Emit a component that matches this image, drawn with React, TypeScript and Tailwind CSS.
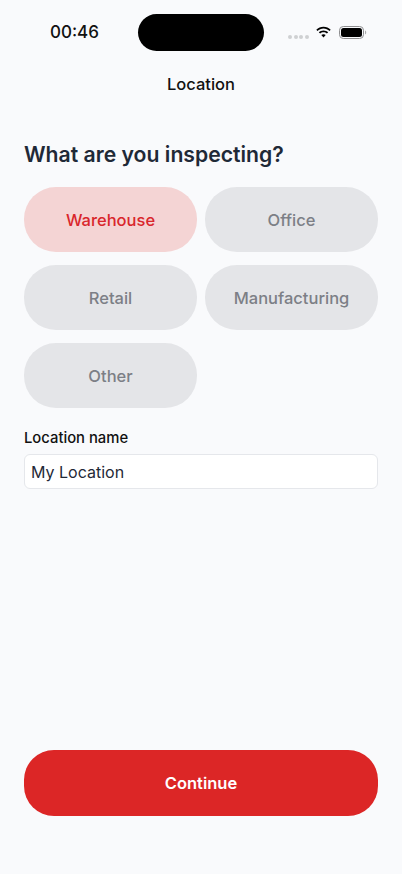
export default function App() {
  const Pill = ({ label, active }: { label: string; active?: boolean }) => (
    <div
      className={
        "h-[65px] pt-[1px] rounded-[32px] flex items-center justify-center text-[16.5px] font-medium " +
        (active ? "bg-[#f4d4d4] text-[#d9262c]" : "bg-[#e4e5e8] text-[#7c7f86]")
      }
    >
      {label}
    </div>
  );
  return (
    <div
      className="w-[402px] h-[874px] bg-[#f9fafc] flex flex-col overflow-hidden"
      style={{ fontFamily: "Inter, sans-serif" }}
    >
      <div className="relative h-[64px] shrink-0">
        <div className="absolute left-[50px] top-[21px] text-[17px] leading-[22px] font-medium text-[#111]">00:46</div>
        <div className="absolute left-[138px] top-[14px] w-[126px] h-[37px] rounded-full bg-black" />
        <div className="absolute left-[288px] top-[35px] flex gap-[1.5px]">
          <span className="w-[4px] h-[4px] rounded-full bg-[#cfd0d2]" />
          <span className="w-[4px] h-[4px] rounded-full bg-[#cfd0d2]" />
          <span className="w-[4px] h-[4px] rounded-full bg-[#cfd0d2]" />
          <span className="w-[4px] h-[4px] rounded-full bg-[#cfd0d2]" />
        </div>
        <svg className="absolute left-[315px] top-[26px]" width="17" height="13" viewBox="0 0 17 13">
          <path d="M8.5 2.6c2.3 0 4.4.9 6 2.4l1.2-1.3C13.8 1.9 11.3.8 8.5.8S3.2 1.9 1.3 3.7L2.5 5c1.6-1.5 3.7-2.4 6-2.4z" fill="#000" />
          <path d="M8.5 6.3c1.3 0 2.5.5 3.4 1.3l1.3-1.3C11.9 5.1 10.3 4.4 8.5 4.4s-3.4.7-4.7 1.9l1.3 1.3c.9-.8 2.1-1.3 3.4-1.3z" fill="#000" />
          <path d="M8.5 8.2c-.9 0-1.6.3-2.2.9l2.2 2.4 2.2-2.4c-.6-.6-1.3-.9-2.2-.9z" fill="#000" />
        </svg>
        <svg className="absolute left-[339px] top-[26px]" width="28" height="13" viewBox="0 0 28 13">
          <rect x="0.5" y="0.5" width="24" height="12" rx="3.8" fill="none" stroke="#8e8e90" />
          <rect x="2" y="2" width="21" height="9" rx="2.5" fill="#000" />
          <path d="M26 4.6c.8.3 1.2 1 1.2 1.9s-.4 1.6-1.2 1.9z" fill="#a8a8aa" />
        </svg>
      </div>

      <div className="h-[40px] shrink-0 flex items-center justify-center text-[16.5px] font-medium text-[#111]">Location</div>

      <div className="flex-1 flex flex-col px-[24px]">
        <h1 className="mt-[35px] text-[21.2px] leading-[30px] font-semibold text-[#1f2937]">What are you inspecting?</h1>
        <div className="mt-[18px] grid grid-cols-2 gap-x-[8px] gap-y-[13px]">
          <Pill label="Warehouse" active />
          <Pill label="Office" />
          <Pill label="Retail" />
          <Pill label="Manufacturing" />
          <Pill label="Other" />
        </div>
        <label className="mt-[20px] text-[14.8px] leading-[20px] font-medium text-[#111]">Location name</label>
        <div className="mt-[6px] h-[35px] rounded-[6px] bg-white border border-[#e5e7eb] flex items-center px-[6px] text-[16px] text-[#1f2937]">
          My Location
        </div>
        <div className="flex-1" />
        <div className="mb-[58px] h-[66px] rounded-[30px] bg-[#dc2626] flex items-center justify-center text-[16.5px] font-semibold text-white">
          Continue
        </div>
      </div>
    </div>
  );
}
